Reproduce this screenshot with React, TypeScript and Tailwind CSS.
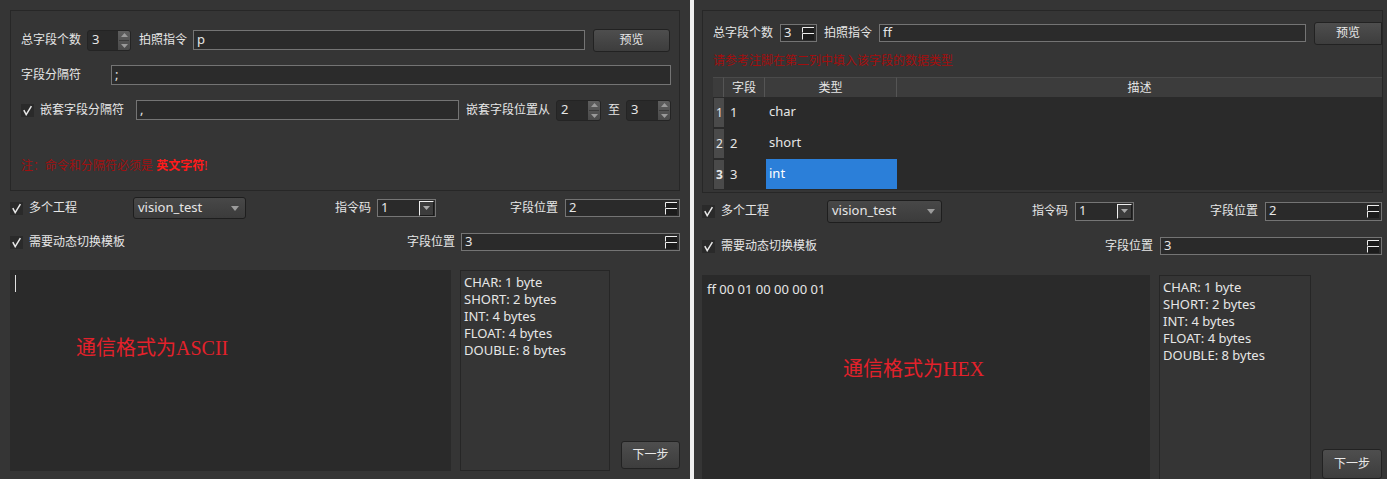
import React from "react";

const F = "font-['Noto_Sans','Noto_Sans_CJK_SC',sans-serif]";

function Label({ children, className = "" }: { children: React.ReactNode; className?: string }) {
  return <span className={`text-[12px] leading-[16px] text-[#e6e6e6] whitespace-nowrap shrink-0 ${className}`}>{children}</span>;
}

function Check() {
  return (
    <div className="w-[13px] h-[13px] bg-[#2a2a2a] flex items-center justify-center shrink-0">
      <svg width="11" height="11" viewBox="0 0 11 11">
        <path d="M1.8 5.2 L4.2 9.6 L9.4 1.2" stroke="#e8e8e8" strokeWidth="1.5" fill="none" />
      </svg>
    </div>
  );
}

function LineEdit({ value, className = "" }: { value: string; className?: string }) {
  return (
    <div className={`border border-[#747474] bg-[#2b2b2b] flex items-center pl-[3px] text-[13px] text-[#e6e6e6] shrink-0 ${className}`}>
      {value}
    </div>
  );
}

function QtSpin({ value, className = "" }: { value: string; className?: string }) {
  return (
    <div className={`h-[21px] rounded-[3px] bg-[#2a2a2a] border border-[#242424] flex items-center shrink-0 ${className}`}>
      <span className="flex-1 pl-[4px] text-[13px] text-[#e6e6e6]">{value}</span>
      <div className="w-[12px] h-[19px] rounded-r-[2px] bg-gradient-to-b from-[#5e5e5e] to-[#4a4a4a] flex flex-col items-center justify-center gap-[3px]">
        <svg width="7" height="4" viewBox="0 0 7 4"><path d="M0 4 L3.5 0 L7 4Z" fill="#9a9a9a" /></svg>
        <div className="w-[10px] h-[1px] bg-[#3a3a3a]" />
        <svg width="7" height="4" viewBox="0 0 7 4"><path d="M0 0 L3.5 4 L7 0Z" fill="#9a9a9a" /></svg>
      </div>
    </div>
  );
}

function FlatSpin({ value, className = "" }: { value: string; className?: string }) {
  return (
    <div className={`border border-[#747474] bg-[#2a2a2a] flex items-center shrink-0 ${className}`}>
      <span className="flex-1 pl-[3px] text-[13px] text-[#e6e6e6]">{value}</span>
      <div className="mr-[2px] w-[12px] h-[13px] bg-[#1c1c1c]">
        <svg width="12" height="13" viewBox="0 0 12 13">
          <path d="M0.5 5.5 V0.5 H12 M0.5 12.5 V6.5 H12" stroke="#eeeeee" strokeWidth="1" fill="none" />
        </svg>
      </div>
    </div>
  );
}

function Combo({ value, className = "" }: { value: string; className?: string }) {
  return (
    <div className={`rounded-[3px] border border-[#1e1e1e] bg-gradient-to-b from-[#484848] to-[#3b3b3b] flex items-center pl-[4px] pr-[6px] shrink-0 ${className}`}>
      <span className="flex-1 text-[13px] text-[#e6e6e6]">{value}</span>
      <svg width="8" height="5" viewBox="0 0 8 5"><path d="M0 0 L4 5 L8 0Z" fill="#9c9c9c" /></svg>
    </div>
  );
}

function SmallCombo({ value, className = "" }: { value: string; className?: string }) {
  return (
    <div className={`border border-[#767676] bg-[#2a2a2a] flex items-center pl-[3px] shrink-0 ${className}`}>
      <span className="flex-1 text-[13px] text-[#e6e6e6]">{value}</span>
      <div className="mr-[1px] w-[15px] h-[15px] border-l border-t border-l-[#f0f0f0] border-t-[#f0f0f0] border-r border-b border-r-[#1a1a1a] border-b-[#1a1a1a] bg-[#3c3c3c] flex items-center justify-center">
        <svg width="7" height="4" viewBox="0 0 7 4"><path d="M0 0 L3.5 4 L7 0Z" fill="#a8a8a8" /></svg>
      </div>
    </div>
  );
}

function Btn({ children, className = "" }: { children: React.ReactNode; className?: string }) {
  return (
    <div className={`rounded-[3px] border border-[#222222] bg-gradient-to-b from-[#4e4e4e] to-[#3d3d3d] flex items-center justify-center text-[12px] text-[#e8e8e8] shrink-0 ${className}`}>
      {children}
    </div>
  );
}

function InfoLines() {
  const lines = ["CHAR: 1 byte", "SHORT: 2 bytes", "INT: 4 bytes", "FLOAT: 4 bytes", "DOUBLE: 8 bytes"];
  return (
    <>
      {lines.map((l) => (
        <div key={l} className="text-[13px] leading-[17px] text-[#e6e6e6] whitespace-nowrap">{l}</div>
      ))}
    </>
  );
}

function LeftPanel() {
  return (
    <div className="w-[690px] h-[479px] shrink-0 bg-[#353535] px-[10px] pt-[10px] flex flex-col overflow-hidden">
      <div className="h-[181px] shrink-0 border border-[#272727] pl-[10px] pr-[9px] pt-[17px] flex flex-col">
        <div className="h-[24px] flex items-center">
          <Label>总字段个数</Label>
          <QtSpin className="ml-[6px] w-[44px]" value="3" />
          <Label className="ml-[8px] w-[48px]">拍照指令</Label>
          <LineEdit className="ml-[6px] w-[392px] h-[20px]" value="p" />
          <Btn className="ml-[8px] w-[77px] h-[23px]">预览</Btn>
        </div>
        <div className="h-[24px] mt-[11px] flex items-center">
          <Label className="w-[90px]">字段分隔符</Label>
          <LineEdit className="w-[560px] h-[20px]" value=";" />
        </div>
        <div className="h-[24px] mt-[11px] flex items-center">
          <Check />
          <Label className="ml-[6px] w-[84px]">嵌套字段分隔符</Label>
          <LineEdit className="ml-[12px] w-[323px] h-[20px]" value="," />
          <Label className="ml-[7px] w-[84px]">嵌套字段位置从</Label>
          <QtSpin className="ml-[6px] w-[45px]" value="2" />
          <Label className="ml-[7px] w-[12px]">至</Label>
          <QtSpin className="ml-[6px] w-[45px]" value="3" />
        </div>
        <div className="mt-[36px] h-[16px] text-[12px] leading-[16px] whitespace-nowrap">
          <span className="text-[#a01010]">注：命令和分隔符必须是 </span>
          <span className="text-[#ff1a1a] font-bold">英文字符</span>
          <span className="text-[#ff1a1a]">!</span>
        </div>
      </div>

      <div className="mt-[5px] h-[24px] shrink-0 flex items-center">
        <Check />
        <Label className="ml-[6px] w-[48px]">多个工程</Label>
        <Combo className="ml-[56px] w-[113px] h-[22px]" value="vision_test" />
        <Label className="ml-[89px] w-[36px]">指令码</Label>
        <SmallCombo className="ml-[6px] w-[59px] h-[18px]" value="1" />
        <Label className="ml-auto w-[48px]">字段位置</Label>
        <FlatSpin className="ml-[7px] w-[115px] h-[18px]" value="2" />
      </div>
      <div className="mt-[10px] h-[24px] shrink-0 flex items-center">
        <Check />
        <Label className="ml-[6px]">需要动态切换模板</Label>
        <Label className="ml-auto w-[48px]">字段位置</Label>
        <FlatSpin className="ml-[6px] w-[219px] h-[18px]" value="3" />
      </div>

      <div className="mt-[16px] h-[201px] shrink-0 flex">
        <div className="relative w-[441px] h-full bg-[#2a2a2a] shrink-0">
          <div className="absolute left-[5px] top-[5px] w-[1px] h-[17px] bg-[#e0e0e0]" />
          <div className="absolute left-[66px] top-[66px] text-[20px] leading-[24px] text-[#e3212b] whitespace-nowrap font-['Liberation_Serif','Noto_Sans_CJK_SC',serif]">
            通信格式为ASCII
          </div>
        </div>
        <div className="ml-[9px] w-[150px] h-full border border-[#262626] pl-[3px] pt-[3px] shrink-0">
          <InfoLines />
        </div>
        <div className="ml-[11px] pt-[171px]">
          <Btn className="w-[59px] h-[28px]">下一步</Btn>
        </div>
      </div>
    </div>
  );
}

function RightPanel() {
  const rows = [
    { n: "1", t: "char" },
    { n: "2", t: "short" },
    { n: "3", t: "int" },
  ];
  return (
    <div className="w-[693px] h-[479px] shrink-0 bg-[#353535] pl-[8px] pr-[4px] pt-[10px] flex flex-col overflow-hidden">
      <div className="h-[183px] shrink-0 border border-[#272727] pl-[10px] pr-0 pt-[10px] flex flex-col overflow-hidden">
        <div className="h-[24px] shrink-0 flex items-center">
          <Label>总字段个数</Label>
          <FlatSpin className="ml-[7px] w-[37px] h-[18px]" value="3" />
          <Label className="ml-[7px] w-[48px]">拍照指令</Label>
          <LineEdit className="ml-[7px] w-[427px] h-[18px]" value="ff" />
          <Btn className="ml-[8px] w-[68px] h-[23px] rounded-r-none">预览</Btn>
        </div>
        <div className="mt-[8px] h-[16px] shrink-0 text-[12px] leading-[16px] text-[#a30e0e] whitespace-nowrap">
          请参考注脚在第二列中填入该字段的数据类型
        </div>
        <div className="mt-[8px] w-[669px] shrink-0 grid grid-cols-[11px_41px_132px_1fr] text-[12px] text-[#e6e6e6]">
          <div className="h-[20px] bg-[#3c3c3c] border-t border-[#4a4a4a] border-r border-r-[#555555]" />
          <div className="h-[20px] bg-[#3c3c3c] border-t border-[#4a4a4a] border-r border-r-[#555555] flex items-center justify-center">字段</div>
          <div className="h-[20px] bg-[#3c3c3c] border-t border-[#4a4a4a] border-r border-r-[#555555] flex items-center justify-center">类型</div>
          <div className="h-[20px] bg-[#3c3c3c] border-t border-[#4a4a4a] flex items-center justify-center">描述</div>
          {rows.map((r, i) => (
            <React.Fragment key={r.n}>
              <div className="h-[31px] bg-[#2a2a2a] py-[1px] pl-[1px]">
                <div className={`h-full bg-[#4a4a4a] flex items-center pl-[2px] ${i === 2 ? "font-bold" : ""}`}>{r.n}</div>
              </div>
              <div className="h-[31px] bg-[#2a2a2a] flex items-center pl-[6px] text-[13px]">{r.n}</div>
              <div className="h-[31px] bg-[#2a2a2a] pl-[1px] pb-[1px]">
                <div className={`h-full flex items-center pl-[3px] text-[13px] ${i === 2 ? "bg-[#2b7fd9] text-white" : ""}`}>{r.t}</div>
              </div>
              <div className="h-[31px] bg-[#2a2a2a]" />
            </React.Fragment>
          ))}
        </div>
      </div>

      <div className="mt-[6px] h-[24px] shrink-0 flex items-center pr-[1px]">
        <Check />
        <Label className="ml-[6px] w-[48px]">多个工程</Label>
        <Combo className="ml-[58px] w-[115px] h-[23px]" value="vision_test" />
        <Label className="ml-[90px] w-[36px]">指令码</Label>
        <SmallCombo className="ml-[7px] w-[59px] h-[19px]" value="1" />
        <Label className="ml-auto w-[48px]">字段位置</Label>
        <FlatSpin className="ml-[7px] w-[117px] h-[19px]" value="2" />
      </div>
      <div className="mt-[11px] h-[24px] shrink-0 flex items-center pr-[1px]">
        <Check />
        <Label className="ml-[6px]">需要动态切换模板</Label>
        <Label className="ml-auto w-[48px]">字段位置</Label>
        <FlatSpin className="ml-[7px] w-[222px] h-[18px]" value="3" />
      </div>

      <div className="mt-[17px] h-[210px] flex shrink-0">
        <div className="relative w-[448px] h-full bg-[#2a2a2a] shrink-0">
          <div className="absolute left-[5px] top-[6px] text-[13px] leading-[17px] text-[#e6e6e6] whitespace-nowrap">ff 00 01 00 00 00 01</div>
          <div className="absolute left-[141px] top-[82px] text-[20px] leading-[24px] text-[#e3212b] whitespace-nowrap font-['Liberation_Serif','Noto_Sans_CJK_SC',serif]">
            通信格式为HEX
          </div>
        </div>
        <div className="ml-[9px] w-[152px] h-full border border-[#262626] pl-[3px] pt-[3px] shrink-0">
          <InfoLines />
        </div>
        <div className="ml-[11px] pt-[174px]">
          <Btn className="w-[60px] h-[30px]">下一步</Btn>
        </div>
      </div>
    </div>
  );
}

export default function App() {
  return (
    <div className={`w-[1387px] h-[479px] flex overflow-hidden bg-[#f0f0f0] ${F}`}>
      <LeftPanel />
      <div className="w-[4px] h-full bg-[#f0f0f0] shrink-0" />
      <RightPanel />
    </div>
  );
}
